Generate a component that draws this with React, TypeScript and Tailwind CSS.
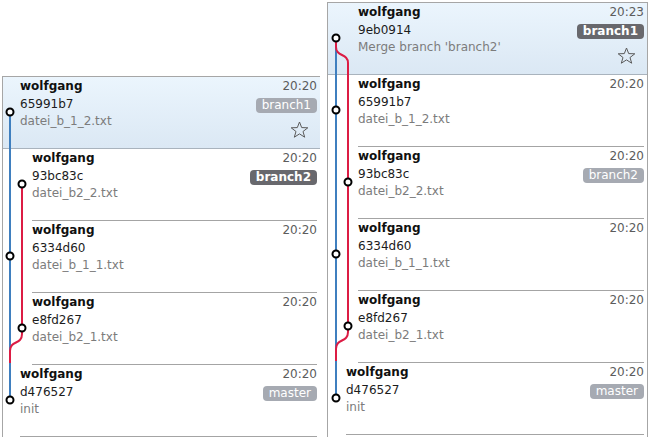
import React from "react";

type Badge = { label: string; head?: boolean };

type Commit = {
  hash: string;
  msg: string;
  time: string;
  indent: string;
  badge?: Badge;
  selected?: boolean;
};

type Circle = { x: number; y: number };

const leftCommits: Commit[] = [
  { hash: "65991b7", msg: "datei_b_1_2.txt", time: "20:20", indent: "pl-[17px]", badge: { label: "branch1" }, selected: true },
  { hash: "93bc83c", msg: "datei_b2_2.txt", time: "20:20", indent: "ml-[29px]", badge: { label: "branch2", head: true } },
  { hash: "6334d60", msg: "datei_b_1_1.txt", time: "20:20", indent: "ml-[29px]" },
  { hash: "e8fd267", msg: "datei_b2_1.txt", time: "20:20", indent: "ml-[29px]" },
  { hash: "d476527", msg: "init", time: "20:20", indent: "ml-[17px]", badge: { label: "master" } },
];

const rightCommits: Commit[] = [
  { hash: "9eb0914", msg: "Merge branch 'branch2'", time: "20:23", indent: "pl-[30px]", badge: { label: "branch1", head: true }, selected: true },
  { hash: "65991b7", msg: "datei_b_1_2.txt", time: "20:20", indent: "ml-[30px]" },
  { hash: "93bc83c", msg: "datei_b2_2.txt", time: "20:20", indent: "ml-[30px]", badge: { label: "branch2" } },
  { hash: "6334d60", msg: "datei_b_1_1.txt", time: "20:20", indent: "ml-[30px]" },
  { hash: "e8fd267", msg: "datei_b2_1.txt", time: "20:20", indent: "ml-[30px]" },
  { hash: "d476527", msg: "init", time: "20:20", indent: "ml-[18px]", badge: { label: "master" } },
];

const BLUE = "#3f7fbf";
const RED = "#dc1c44";

function Star() {
  return (
    <svg width="19" height="17" viewBox="0 0 19 17" className="block">
      <polygon
        points="9.5,1 11.7,6.6 17.8,6.8 13,10.5 14.7,16.2 9.5,12.9 4.3,16.2 6,10.5 1.2,6.8 7.3,6.6"
        fill="none"
        stroke="#5a5a5a"
        strokeWidth="1"
        strokeLinejoin="miter"
      />
    </svg>
  );
}

function BranchBadge({ badge }: { badge: Badge }) {
  return (
    <span
      className={`mt-[2px] inline-block h-[15px] rounded-[4px] px-[6px] text-[12px] leading-[15px] text-white ${
        badge.head ? "bg-[#68686d] font-bold" : "bg-[#a6aab2]"
      }`}
    >
      {badge.label}
    </span>
  );
}

function CommitRow({ c }: { c: Commit }) {
  const content = (
    <>
      <div className="flex min-w-0 flex-1 flex-col">
        <span className="font-bold text-[#101010]">wolfgang</span>
        <span className="text-[#1c1c1c]">{c.hash}</span>
        <span className="text-[#7c7c7c]">{c.msg}</span>
      </div>
      <div className="flex flex-col items-end">
        <span className="text-[#5c5c5c]">{c.time}</span>
        {c.badge && <BranchBadge badge={c.badge} />}
        {c.selected && (
          <span className="mr-[8px] mt-[8px]">
            <Star />
          </span>
        )}
      </div>
    </>
  );

  if (c.selected) {
    return (
      <div className="h-[72px] border-b border-[#a9b3bd] bg-gradient-to-b from-[#ebf5fd] to-[#dbe8f4]">
        <div className={`flex h-full pr-[3px] pt-[1px] ${c.indent}`}>{content}</div>
      </div>
    );
  }

  return (
    <div className="h-[72px]">
      <div className={`mr-[3px] flex h-full border-b border-[#a4a4a4] pt-[1px] ${c.indent}`}>{content}</div>
    </div>
  );
}

function Graph({ blue, red, circles }: { blue: string; red: string; circles: Circle[] }) {
  return (
    <svg className="pointer-events-none absolute left-0 top-0" width="40" height="440">
      <path d={blue} stroke={BLUE} strokeWidth="2" fill="none" />
      <path d={red} stroke={RED} strokeWidth="2" fill="none" />
      {circles.map((p, i) => (
        <circle key={i} cx={p.x} cy={p.y} r="3.5" fill="#fff" stroke="#000" strokeWidth="2" />
      ))}
    </svg>
  );
}

export default function App() {
  const leftCircles: Circle[] = [
    { x: 7, y: 35 },
    { x: 19, y: 107 },
    { x: 7, y: 179 },
    { x: 19, y: 251 },
    { x: 7, y: 323 },
  ];
  const rightCircles: Circle[] = [
    { x: 8, y: 35 },
    { x: 8, y: 107 },
    { x: 20, y: 179 },
    { x: 8, y: 251 },
    { x: 20, y: 323 },
    { x: 8, y: 395 },
  ];

  return (
    <div className="flex h-[437px] w-[649px] items-start overflow-hidden bg-white font-['DejaVu_Sans',sans-serif] text-[12px] leading-[17.5px]">
      {/* linke Ansicht: vor dem Merge */}
      <div className="relative ml-[2px] mt-[76px] h-[361px] w-[318px] border-l border-t border-[#a6a6a6]">
        {leftCommits.map((c) => (
          <CommitRow key={c.hash} c={c} />
        ))}
        <Graph
          blue="M7 35 V323"
          red="M19 107 V257 C19 268 7 263 7 274 V286"
          circles={leftCircles}
        />
      </div>

      {/* rechte Ansicht: nach dem Merge */}
      <div className="relative ml-[7px] mt-[2px] h-[435px] w-[321px] border-l border-r border-t border-[#a6a6a6]">
        {rightCommits.map((c) => (
          <CommitRow key={c.hash} c={c} />
        ))}
        <Graph
          blue="M8 35 V395"
          red="M8 35 V44 C8 54 20 50 20 60 V329 C20 340 8 335 8 346 V358"
          circles={rightCircles}
        />
      </div>
    </div>
  );
}
